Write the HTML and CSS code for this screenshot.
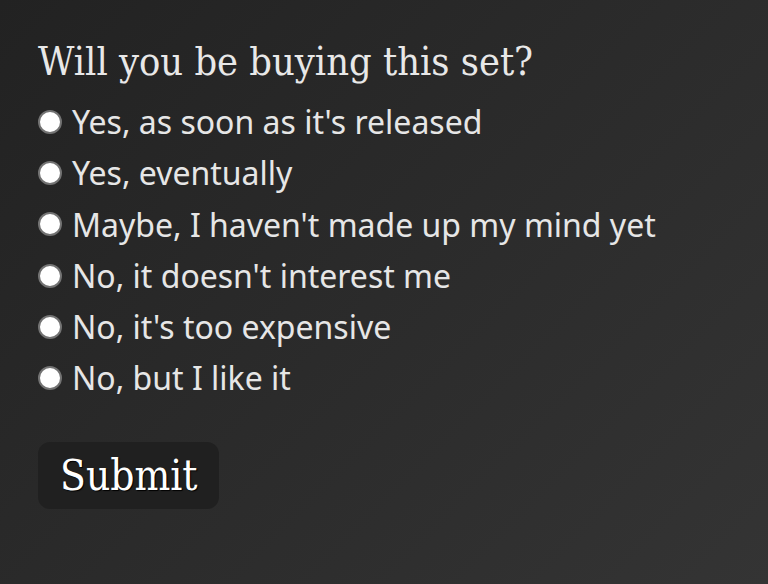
FILE: index.html
```html
<!DOCTYPE html>
<html lang="en">
<head>
    <meta charset="UTF-8">
    <meta name="viewport" content="width=device-width, initial-scale=1.0">
    <title>Poll</title>
    <link rel="stylesheet" href="styles.css">
</head>
<body>
    <form class="poll" onsubmit="return false">
        <h1>Will you be buying this set?</h1>
        <div class="options">
            <label class="option"><input type="radio" name="vote" value="1"> Yes, as soon as it's released</label>
            <label class="option"><input type="radio" name="vote" value="2"> Yes, eventually</label>
            <label class="option"><input type="radio" name="vote" value="3"> Maybe, I haven't made up my mind yet</label>
            <label class="option"><input type="radio" name="vote" value="4"> No, it doesn't interest me</label>
            <label class="option"><input type="radio" name="vote" value="5"> No, it's too expensive</label>
            <label class="option"><input type="radio" name="vote" value="6"> No, but I like it</label>
        </div>
        <button type="submit">Submit</button>
    </form>
</body>
</html>
```

FILE: styles.css
```css
html {
    height: 100%;
}

body {
    margin: 0;
    min-height: 100%;
    background: linear-gradient(135deg, #222222 0%, #2b2b2b 50%, #343434 100%);
    color: #e6e6e6;
    font-family: 'Noto Sans', 'Open Sans', sans-serif;
}

.poll {
    padding: 36px 38px;
    display: flex;
    flex-direction: column;
    align-items: flex-start;
}

h1 {
    margin: 0 0 10px 0;
    font-family: 'DejaVu Serif', serif;
    font-stretch: condensed;
    font-weight: normal;
    font-size: 39.4px;
    line-height: 50px;
    color: #e8e8e8;
}

.options {
    display: flex;
    flex-direction: column;
}

.option {
    display: flex;
    align-items: center;
    gap: 10px;
    font-size: 32px;
    line-height: 51.3px;
    color: #e6e6e6;
}

.option input {
    appearance: none;
    margin: 0;
    width: 24px;
    height: 24px;
    border-radius: 50%;
    background: #ffffff;
    border: 2px solid #737373;
    box-sizing: border-box;
}

button {
    margin-top: 38px;
    padding: 0 22px;
    height: 67px;
    background-color: #202020;
    color: #ffffff;
    border: none;
    border-radius: 12px;
    font-family: 'DejaVu Serif', serif;
    font-stretch: condensed;
    font-size: 42px;
    text-shadow: 1px 1px 1px #000000;
    cursor: pointer;
}
```
